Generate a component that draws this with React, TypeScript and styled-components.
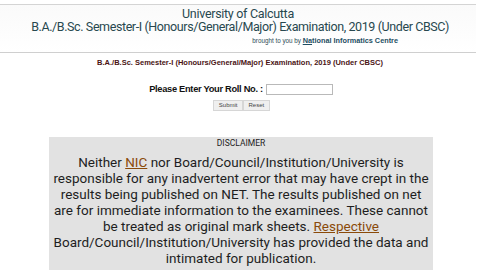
import React from "react";
import styled, { createGlobalStyle } from "styled-components";

const GlobalStyle = createGlobalStyle`
  body {
    margin: 0;
    background: #ffffff;
    font-family: Roboto, "Liberation Sans", sans-serif;
  }
`;

export default function App() {
  return (
    <>
      <GlobalStyle />
      <Page>
        <Header>
          <University>University of Calcutta</University>
          <ExamTitle>
            B.A./B.Sc. Semester-I (Honours/General/Major) Examination, 2019 (Under CBSC)
          </ExamTitle>
          <Credit>
            brought to you by{" "}
            <CreditLink>
              <u>Na</u>tional Informatics Centre
            </CreditLink>
          </Credit>
        </Header>
        <SubTitle>
          B.A./B.Sc. Semester-I (Honours/General/Major) Examination, 2019 (Under CBSC)
        </SubTitle>
        <Form>
          <RollRow>
            <Label>Please Enter Your Roll No. :</Label>
            <RollInput type="text" />
          </RollRow>
          <ButtonRow>
            <FormButton type="button">Submit</FormButton>
            <FormButton type="button">Reset</FormButton>
          </ButtonRow>
        </Form>
        <Disclaimer>
          <DisclaimerTitle>DISCLAIMER</DisclaimerTitle>
          <DisclaimerText>
            Neither <Link>NIC</Link> nor Board/Council/Institution/University is
            responsible for any inadvertent error that may have crept in the
            results being published on NET. The results published on net are for
            immediate information to the examinees. These cannot be treated as
            original mark sheets. <Link>Respective</Link>{" "}
            Board/Council/Institution/University has provided the data and
            intimated for publication.
          </DisclaimerText>
        </Disclaimer>
      </Page>
    </>
  );
}

const Page = styled.div`
  width: 480px;
  height: 270px;
  overflow: hidden;
  display: flex;
  flex-direction: column;
`;

const Header = styled.div`
  margin: 4px 4px 0 0;
  border-top: 1px solid #d4d4d4;
  border-bottom: 1px solid #cfcfcf;
  background: linear-gradient(#fafafa, #ffffff);
  padding: 1.5px 0 7px;
  display: flex;
  flex-direction: column;
  align-items: center;
  color: #28484f;
`;

const University = styled.div`
  font-size: 12.5px;
  line-height: 13px;
  letter-spacing: -0.3px;
`;

const ExamTitle = styled.div`
  font-size: 12.5px;
  line-height: 13px;
  letter-spacing: -0.4px;
  white-space: nowrap;
  padding-left: 4px;
`;

const Credit = styled.div`
  align-self: flex-end;
  margin: 3px 78px 0 0;
  font-family: "Liberation Sans", Arial, sans-serif;
  font-size: 6.3px;
  line-height: 9px;
  color: #2e4a55;
`;

const CreditLink = styled.span`
  font-size: 7.3px;
  font-weight: bold;
  color: #1f4e63;
`;

const SubTitle = styled.div`
  margin-top: 5px;
  text-align: center;
  font-family: "Liberation Sans", Arial, sans-serif;
  font-size: 7.5px;
  font-weight: bold;
  line-height: 10px;
  color: #4a1414;
  white-space: nowrap;
`;

const Form = styled.div`
  margin-top: 16px;
  display: flex;
  flex-direction: column;
  align-items: center;
  gap: 5px;
`;

const RollRow = styled.div`
  display: flex;
  align-items: center;
  gap: 3px;
  padding-left: 2px;
`;

const Label = styled.span`
  font-family: "Liberation Sans", Arial, sans-serif;
  font-size: 9.3px;
  font-weight: bold;
  color: #111;
  letter-spacing: -0.3px;
`;

const RollInput = styled.input`
  box-sizing: border-box;
  width: 67px;
  height: 11px;
  border: 1px solid #b9b9b9;
  padding: 0;
  background: #fff;
`;

const ButtonRow = styled.div`
  display: flex;
  padding-left: 3px;
`;

const FormButton = styled.button`
  box-sizing: border-box;
  height: 11px;
  padding: 0 4.5px;
  border: 1px solid #d6d6d6;
  background: #efefef;
  font-family: "Liberation Sans", Arial, sans-serif;
  font-size: 6px;
  color: #444;
  line-height: 9px;
`;

const Disclaimer = styled.div`
  margin: 26px 0 0 49px;
  width: 384px;
  flex: 1;
  background: #e2e2e2;
  text-align: center;
  color: #1e1e1e;
`;

const DisclaimerTitle = styled.div`
  font-size: 8.5px;
  line-height: 12px;
  color: #222;
`;

const DisclaimerText = styled.div`
  font-size: 13.5px;
  line-height: 16px;
  padding: 5px 2px 0;
`;

const Link = styled.span`
  color: #8a4a0a;
  text-decoration: underline;
`;
